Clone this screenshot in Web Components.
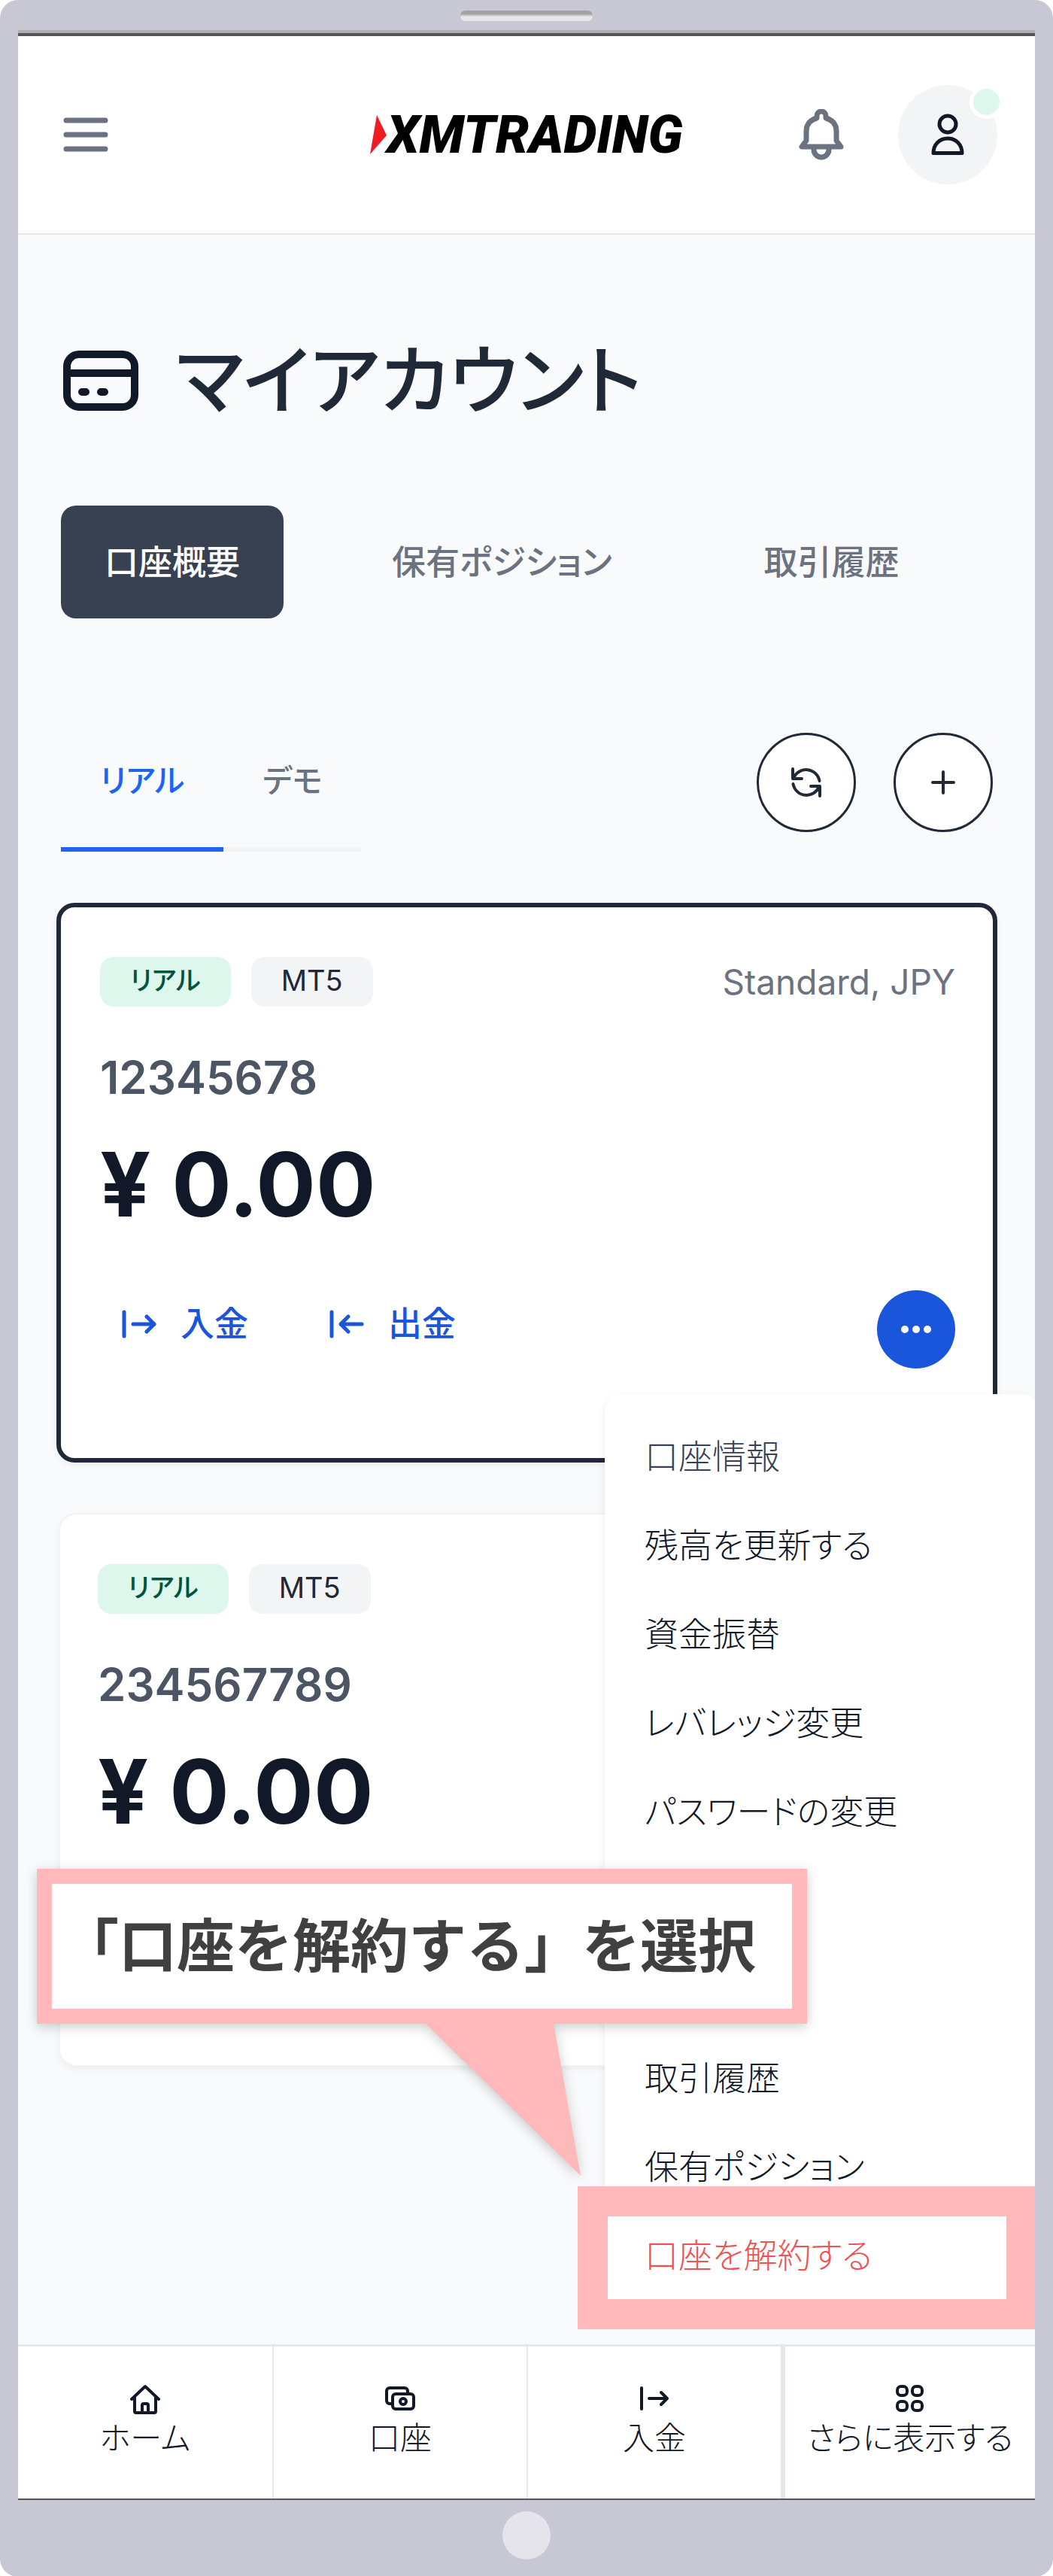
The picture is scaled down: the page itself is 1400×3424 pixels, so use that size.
<!DOCTYPE html>
<html lang="ja">
<head>
  <meta charset="UTF-8">
  <meta name="viewport" content="width=device-width, initial-scale=1.0">
  <title>マイアカウント</title>
  <style>
    body{
      margin: 0;
      background-color: #fff;
      color: #111827;
      font-family: Inter, "Noto Sans CJK JP", sans-serif;
      font-feature-settings: "palt";
    }
  </style>
</head>
<body>
  <template id="phone-frame">
    <style>
      :host{
        display: flex;
        flex-direction: column;
        box-sizing: border-box;
        min-height: 100vh;
        padding: 0 24px;
        border-radius: 24px;
        background-color: #c8c7d4;
      }
      .top, .bottom{
        display: flex;
        justify-content: center;
      }
      .top{
        padding: 14px 0 12px;
      }
      .speaker{
        width: 176px;
        height: 14px;
        border-radius: 7px;
        background: linear-gradient(#a2a2a2 30%, #e8e8e8 60%);
      }
      .screen{
        display: flex;
        flex-direction: column;
        flex: 1;
        position: relative;
        overflow: clip;
        border-top: 4px solid #555;
        border-bottom: 2px solid #555;
        background-color: #f9fafc;
      }
      .shade{
        height: 4px;
        background-color: #adadad;
      }
      .bottom{
        padding: 15px 0 23px;
      }
      .home{
        width: 64px;
        height: 64px;
        padding: 0;
        border: 0;
        border-radius: 50%;
        background-color: #e4e4ea;
      }
    </style>
    <div class="top"><div class="speaker"></div></div>
    <div class="shade"></div>
    <div class="screen"><slot></slot></div>
    <div class="bottom"><button class="home" aria-label="ホームボタン"></button></div>
  </template>

  <template id="app-header">
    <style>
      :host{
        display: grid;
        grid-template-columns: 1fr auto 1fr;
        align-items: center;
        height: 262px;
        padding: 0 50px;
        border-bottom: 2px solid #e5e7eb;
        background-color: #fff;
      }
      button{
        display: flex;
        align-items: center;
        justify-content: center;
        padding: 0;
        border: 0;
        background: none;
        color: #6b7280;
      }
      .menu{
        justify-self: start;
        padding: 0 10px;
      }
      .right{
        display: flex;
        align-items: center;
        justify-content: flex-end;
        gap: 72px;
      }
      .avatar{
        position: relative;
        width: 132px;
        height: 132px;
        border-radius: 50%;
        background-color: #f3f4f6;
        color: #111827;
      }
      .dot{
        position: absolute;
        top: 0;
        right: -8px;
        width: 35px;
        height: 35px;
        border: 5px solid #fff;
        border-radius: 50%;
        background-color: #def7ec;
      }
    </style>
    <button class="menu" aria-label="メニュー"><ui-icon name="menu"></ui-icon></button>
    <brand-logo></brand-logo>
    <div class="right">
      <button aria-label="通知"><ui-icon name="bell"></ui-icon></button>
      <button class="avatar" aria-label="プロフィール"><ui-icon name="user"></ui-icon><span class="dot"></span></button>
    </div>
  </template>

  <template id="brand-logo">
    <style>
      :host{
        display: flex;
        align-items: center;
        color: #000;
        font: italic 900 70px/80px Roboto, sans-serif;
      }
      svg{
        display: block;
      }
    </style>
    <svg width="22" height="52" viewBox="0 0 22 52"><path d="M9 0l13 27L0 52z" fill="#ee1c25"/></svg>
    <span>XMTRADING</span>
  </template>

  <template id="page-title">
    <style>
      :host{
        display: flex;
        align-items: center;
        gap: 50px;
        padding: 0 9px;
      }
      h1{
        margin: 0;
        color: #1f2937;
        font-size: 100px;
        font-weight: 500;
        line-height: 128px;
      }
    </style>
    <ui-icon name="card"></ui-icon>
    <h1><slot></slot></h1>
  </template>

  <template id="view-tabs">
    <style>
      :host{
        display: flex;
        gap: 86px;
        padding: 0 6px;
      }
      ::slotted(button){
        height: 150px;
        padding: 0 58px 6px;
        border: 0;
        border-radius: 20px;
        background: none;
        color: #6b7280;
        font: inherit;
        font-size: 45px;
        font-weight: 500;
        white-space: nowrap;
      }
      ::slotted([aria-selected="true"]){
        background-color: #374151;
        color: #fff;
      }
    </style>
    <slot></slot>
  </template>

  <template id="account-toolbar">
    <style>
      :host{
        display: flex;
        justify-content: space-between;
        align-items: flex-start;
        padding: 0 6px;
      }
      .tabs{
        display: flex;
      }
      .tools{
        display: flex;
        gap: 50px;
      }
      ::slotted(button){
        padding: 0 52px 24px;
        border: 0;
        border-bottom: 6px solid #f3f4f6;
        background: none;
        color: #6b7280;
        font: inherit;
        font-size: 42px;
        font-weight: 500;
        line-height: 128px;
      }
      ::slotted([aria-selected="true"]){
        border-bottom-color: #1c64f2;
        color: #1c64f2;
      }
      .tools button{
        display: flex;
        align-items: center;
        justify-content: center;
        width: 132px;
        height: 132px;
        padding: 0;
        border: 3px solid #1f2937;
        border-radius: 50%;
        background-color: #fff;
        color: #1f2937;
      }
    </style>
    <div class="tabs" role="tablist"><slot></slot></div>
    <div class="tools">
      <button aria-label="更新"><ui-icon name="refresh"></ui-icon></button>
      <button aria-label="追加"><ui-icon name="plus"></ui-icon></button>
    </div>
  </template>

  <template id="account-card">
    <style>
      :host{
        display: block;
        position: relative;
        margin: 0 3px;
        padding: 66px 50px 119px;
        border: 2px solid #f3f4f6;
        border-radius: 24px;
        background-color: #fff;
        box-shadow: 0 4px 8px rgba(0, 0, 0, 0.05);
      }
      :host([selected]){
        z-index: 1;
        margin: 0;
        padding-left: 52px;
        border: 6px solid #1f2937;
      }
      .head{
        display: flex;
        align-items: center;
        gap: 27px;
        height: 66px;
      }
      .badge{
        padding: 0 40px 4px;
        border-radius: 18px;
        background-color: #f3f4f6;
        color: #1f2937;
        font-size: 38px;
        line-height: 62px;
      }
      .real{
        background-color: #def7ec;
        color: #03543f;
        font-size: 35px;
        font-weight: 500;
      }
      .type{
        margin-left: auto;
        color: #6b7280;
        font-size: 46px;
      }
      .number{
        margin-top: 58px;
        color: #4b5563;
        font-size: 60px;
        font-weight: 600;
        line-height: 72px;
      }
      .balance{
        margin-top: 46px;
        font-size: 118px;
        font-weight: 700;
        line-height: 120px;
      }
      .actions{
        display: flex;
        align-items: flex-start;
        gap: 108px;
        min-height: 104px;
        margin-top: 81px;
        padding-left: 29px;
      }
      ::slotted(a){
        display: flex;
        align-items: center;
        gap: 32px;
        color: #1a56db;
        font-size: 45px;
        font-weight: 500;
        line-height: 90px;
        text-decoration: none;
      }
      ::slotted(action-menu){
        margin-left: auto;
      }
    </style>
    <div class="head">
      <span class="badge real">リアル</span>
      <span class="badge">MT5</span>
      <span class="type"><slot name="type"></slot></span>
    </div>
    <div class="number"><slot name="number"></slot></div>
    <div class="balance"><slot name="balance"></slot></div>
    <div class="actions"><slot></slot></div>
  </template>

  <template id="action-menu">
    <style>
      :host{
        display: block;
        position: relative;
      }
      button{
        display: flex;
        align-items: center;
        justify-content: center;
        width: 104px;
        height: 104px;
        padding: 0;
        border: 0;
        border-radius: 50%;
        background-color: #1a56db;
        color: #fff;
      }
      nav{
        position: absolute;
        top: calc(100% + 34px);
        right: -114px;
        box-sizing: border-box;
        width: 580px;
        padding: 25px 0;
        border-radius: 24px;
        background-color: #fff;
        box-shadow: 0 4px 12px rgba(0, 0, 0, 0.08);
      }
      ::slotted(a){
        display: block;
        position: relative;
        padding-left: 53px;
        color: #111827;
        font-size: 45px;
        font-weight: 300;
        line-height: 118px;
        text-decoration: none;
      }
      ::slotted(a:first-child){
        color: #374151;
      }
      ::slotted(.after-group){
        margin-top: 236px;
      }
      ::slotted(.danger){
        color: #f05252;
      }
      ::slotted(.danger)::before{
        content: "";
        position: absolute;
        inset: -34px 6px -38px -36px;
        border: 40px solid #ffb9ba;
      }
    </style>
    <button aria-label="その他"><ui-icon name="dots"></ui-icon></button>
    <nav><slot></slot></nav>
  </template>

  <template id="call-out">
    <style>
      :host{
        display: block;
        position: absolute;
        z-index: 2;
        top: 1284px;
        left: -26px;
        filter: drop-shadow(0 4px 8px rgba(0, 0, 0, 0.2));
      }
      p{
        margin: 0;
        padding: 0 48px 0 12px;
        border: 20px solid #ffb9ba;
        background-color: #fff;
        color: #404040;
        font-size: 77px;
        font-weight: 700;
        font-feature-settings: normal;
        line-height: 166px;
        white-space: nowrap;
      }
      svg{
        position: absolute;
        top: 100%;
        left: 517px;
      }
    </style>
    <p><slot></slot></p>
    <svg width="206" height="202" viewBox="0 0 206 202"><path d="M0 0h170l36 202z" fill="#ffb9ba"/></svg>
  </template>

  <template id="bottom-nav">
    <style>
      :host{
        display: grid;
        grid-template-columns: repeat(4, 1fr);
        border-top: 3px solid #e5e7eb;
        background-color: #fff;
      }
      ::slotted(a){
        display: flex;
        flex-direction: column;
        align-items: center;
        gap: 2px;
        padding: 50px 0;
        border-left: 2px solid #e5e7eb;
        color: #111827;
        font-size: 42px;
        font-weight: 300;
        line-height: 60px;
        text-decoration: none;
        white-space: nowrap;
      }
      ::slotted(a:first-child){
        border-left: 0;
      }
      ::slotted(a:last-child){
        border-left-width: 6px;
      }
    </style>
    <slot></slot>
  </template>

  <template id="account-page">
    <style>
      :host{
        display: block;
        flex: 1;
        padding: 130px 50px 0 51px;
      }
      .tabs{
        margin-top: 102px;
      }
      .toolbar{
        margin-top: 152px;
      }
      .list{
        display: flex;
        flex-direction: column;
        gap: 67px;
        position: relative;
        margin-top: 68px;
        padding-bottom: 369px;
      }
    </style>
    <slot name="title"></slot>
    <div class="tabs"><slot name="tabs"></slot></div>
    <div class="toolbar"><slot name="toolbar"></slot></div>
    <div class="list"><slot></slot></div>
  </template>

  <phone-frame>
    <app-header></app-header>
    <account-page>
      <page-title slot="title">マイアカウント</page-title>
      <view-tabs slot="tabs" role="tablist">
        <button role="tab" aria-selected="true">口座概要</button>
        <button role="tab">保有ポジション</button>
        <button role="tab">取引履歴</button>
      </view-tabs>
      <account-toolbar slot="toolbar">
        <button role="tab" aria-selected="true">リアル</button>
        <button role="tab">デモ</button>
      </account-toolbar>
      <account-card selected>
        <span slot="type">Standard, JPY</span>
        <span slot="number">12345678</span>
        <span slot="balance">¥ 0.00</span>
        <a href="#deposit"><ui-icon name="deposit"></ui-icon>入金</a>
        <a href="#withdraw"><ui-icon name="withdraw"></ui-icon>出金</a>
        <action-menu>
          <a href="#info">口座情報</a>
          <a href="#balance">残高を更新する</a>
          <a href="#transfer">資金振替</a>
          <a href="#leverage">レバレッジ変更</a>
          <a href="#password">パスワードの変更</a>
          <a class="after-group" href="#history">取引履歴</a>
          <a href="#positions">保有ポジション</a>
          <a class="danger" href="#close">口座を解約する</a>
        </action-menu>
      </account-card>
      <account-card>
        <span slot="number">234567789</span>
        <span slot="balance">¥ 0.00</span>
      </account-card>
      <call-out>「口座を解約する」を選択</call-out>
    </account-page>
    <bottom-nav>
      <a href="#home"><ui-icon name="home"></ui-icon>ホーム</a>
      <a href="#accounts"><ui-icon name="accounts"></ui-icon>口座</a>
      <a href="#funds"><ui-icon name="enter"></ui-icon>入金</a>
      <a href="#more"><ui-icon name="grid"></ui-icon>さらに表示する</a>
    </bottom-nav>
  </phone-frame>

  <script>
    // name: [width, height, stroke width, shapes]
    const icons = {
      menu: [60, 48, 7, '<path d="M4 5h52M4 24h52M4 43h52"/>'],
      bell: [60, 68, 7, '<path d="M4 50h52l-6-8V29C50 20 44 14 36 12V9a6 6 0 0 0-12 0v3C16 14 10 20 10 29v13zM20 51v3a10 10 0 0 0 20 0v-3"/>'],
      user: [44, 56, 5, '<circle cx="22" cy="14" r="11"/><path d="M3 52.500C3 41 11 33 22 33s19 8 19 19.500z"/>'],
      card: [100, 80, 10, '<rect x="5" y="5" width="90" height="70" rx="16"/><path d="M5 30h90M25 55h5M50 55h5"/>'],
      refresh: [40, 40, 4, '<path d="M2 2v13h12M3 14.500A18 18 0 0 1 37.500 18M38 38V25H26M37 25.500A18 18 0 0 1 2.500 22"/>'],
      plus: [32, 32, 4, '<path d="M16 2v28M2 16h28"/>'],
      deposit: [46, 38, 5, '<path d="M3 3v32M15 19h28M33 9l10 10-10 10"/>'],
      withdraw: [46, 38, 5, '<path d="M3 3v32M15 19h28M25 9L15 19l10 10"/>'],
      dots: [42, 12, 0, '<g fill="currentColor"><circle cx="6" cy="6" r="5"/><circle cx="21" cy="6" r="5"/><circle cx="36" cy="6" r="5"/></g>'],
      home: [40, 40, 4, '<path d="M2 20L20 3l18 17M6 17v19a2 2 0 0 0 2 2h24a2 2 0 0 0 2-2V17M16 38V28a2 2 0 0 1 2-2h4a2 2 0 0 1 2 2v10"/>'],
      accounts: [40, 40, 4, '<path d="M8 26H6a4 4 0 0 1-4-4V9a4 4 0 0 1 4-4h20a4 4 0 0 1 4 4v3"/><rect x="10" y="13" width="28" height="20" rx="4"/><circle cx="24" cy="23" r="4"/>'],
      enter: [40, 40, 4, '<path d="M3 5v28M13 19h24M29 11l8 8-8 8"/>'],
      grid: [40, 40, 4, '<rect x="3" y="3" width="13" height="12" rx="5"/><rect x="23" y="3" width="13" height="12" rx="5"/><rect x="3" y="23" width="13" height="12" rx="5"/><rect x="23" y="23" width="13" height="12" rx="5"/>']
    }

    class UiIcon extends HTMLElement {
      constructor() {
        super()
        this.attachShadow({ mode: 'open' })
      }
      connectedCallback() {
        const [width, height, stroke, shapes] = icons[this.getAttribute('name')]
        this.shadowRoot.innerHTML = `
          <style>
            :host{ display: block; flex: none; }
            svg{ display: block; }
          </style>
          <svg width="${width}" height="${height}" viewBox="0 0 ${width} ${height}" fill="none"
            stroke="currentColor" stroke-width="${stroke}" stroke-linecap="round" stroke-linejoin="round"
            aria-hidden="true">${shapes}</svg>`
      }
    }
    customElements.define('ui-icon', UiIcon)

    class TemplateElement extends HTMLElement {
      constructor() {
        super()
        const shadowRoot = this.attachShadow({ mode: 'open' })
        const template = document.getElementById(this.localName)
        shadowRoot.appendChild(template.content.cloneNode(true))
      }
    }
    class PhoneFrame extends TemplateElement {}
    class AppHeader extends TemplateElement {}
    class BrandLogo extends TemplateElement {}
    class AccountPage extends TemplateElement {}
    class PageTitle extends TemplateElement {}
    class ViewTabs extends TemplateElement {}
    class AccountToolbar extends TemplateElement {}
    class AccountCard extends TemplateElement {}
    class ActionMenu extends TemplateElement {}
    class CallOut extends TemplateElement {}
    class BottomNav extends TemplateElement {}

    customElements.define('phone-frame', PhoneFrame)
    customElements.define('app-header', AppHeader)
    customElements.define('brand-logo', BrandLogo)
    customElements.define('account-page', AccountPage)
    customElements.define('page-title', PageTitle)
    customElements.define('view-tabs', ViewTabs)
    customElements.define('account-toolbar', AccountToolbar)
    customElements.define('account-card', AccountCard)
    customElements.define('action-menu', ActionMenu)
    customElements.define('call-out', CallOut)
    customElements.define('bottom-nav', BottomNav)
  </script>
</body>
</html>
